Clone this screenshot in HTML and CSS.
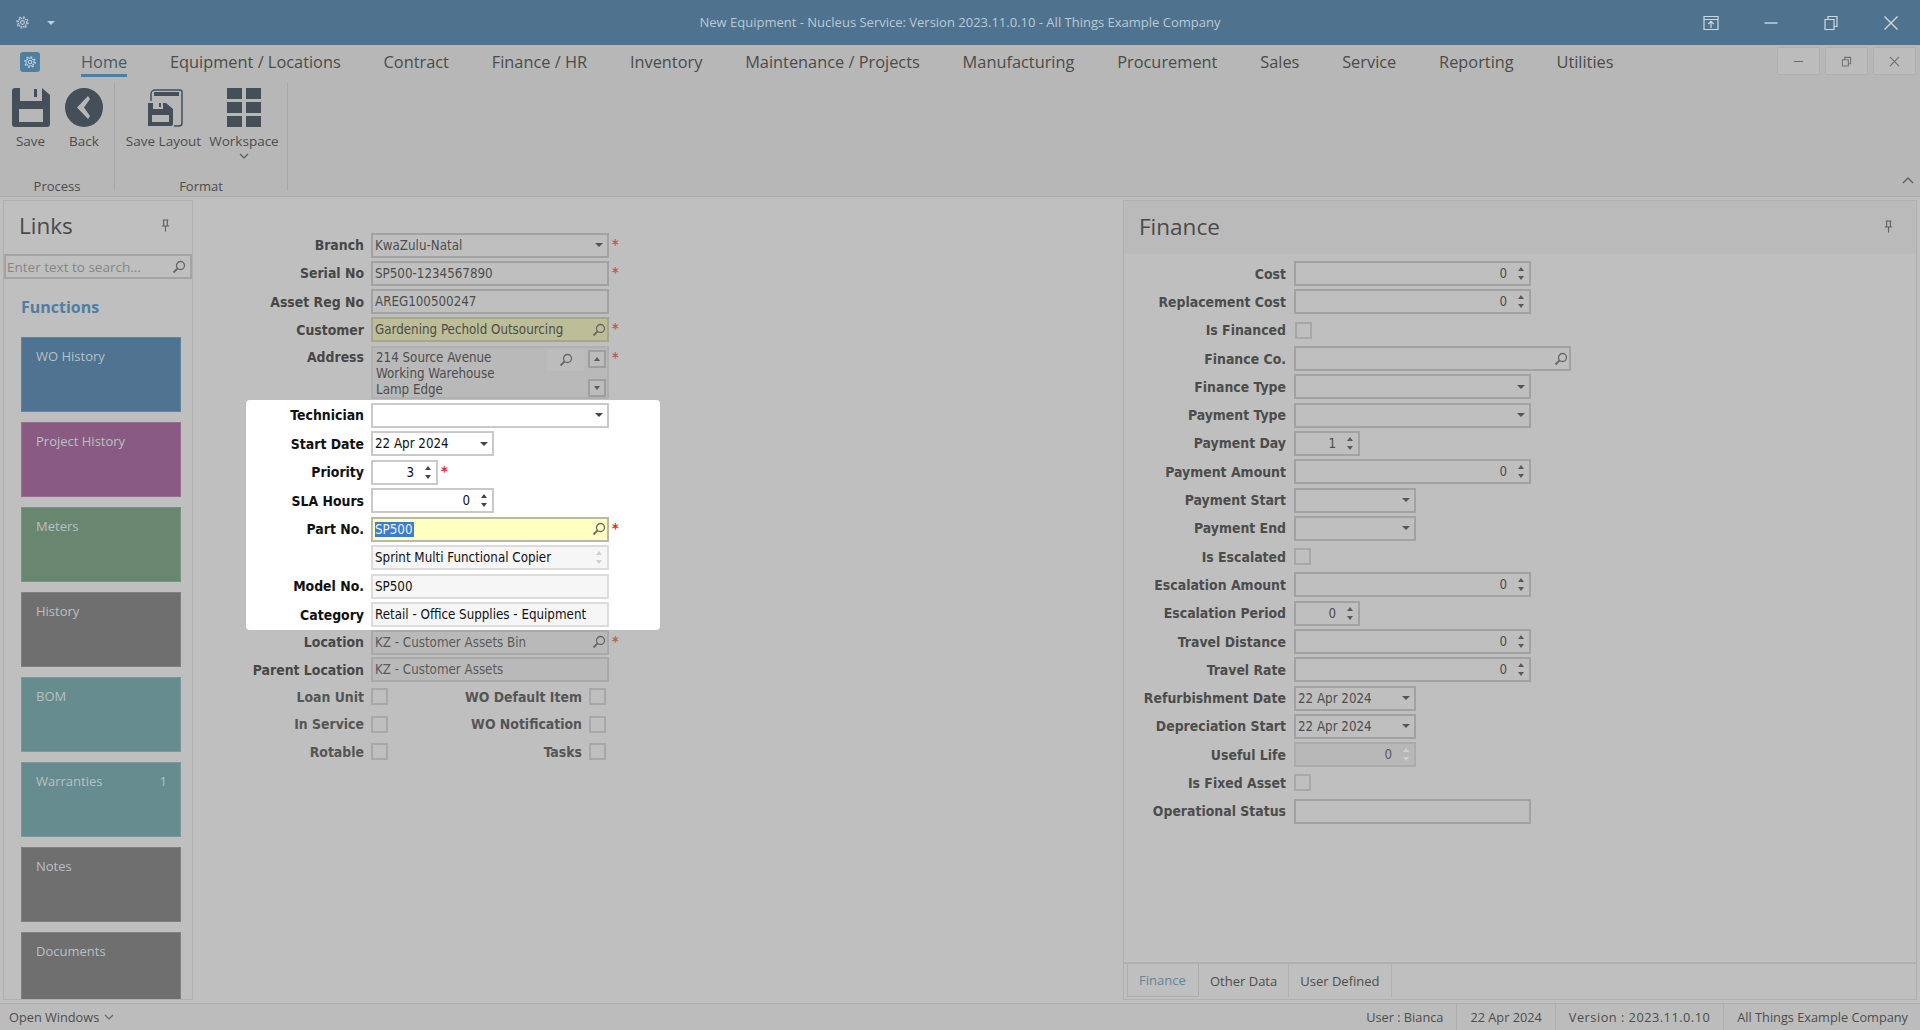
FILE: index.html
```html
<!DOCTYPE html>
<html lang="en">
<head>
<meta charset="utf-8">
<title>New Equipment - Nucleus Service</title>
<link rel="stylesheet" href="styles.css">
</head>
<body>
<svg class="sprite" width="0" height="0" aria-hidden="true">
  <symbol id="mag" viewBox="0 0 14 14"><circle cx="8.5" cy="5.5" r="4" fill="none" stroke="currentColor" stroke-width="1.3"/><path d="M5.6 8.4 1.5 12.5" fill="none" stroke="currentColor" stroke-width="1.8"/></symbol>
  <symbol id="pin" viewBox="0 0 12 14"><path d="M3 1h6M4 1v6M8 1v6M2 7.5h8M6 8v5.5" fill="none" stroke="currentColor" stroke-width="1.2"/></symbol>
  <symbol id="gear" viewBox="0 0 16 16"><circle cx="8" cy="8" r="4.6" fill="none" stroke="currentColor" stroke-width="1.6" stroke-dasharray="1.6 .8"/><circle cx="8" cy="8" r="6" fill="none" stroke="currentColor" stroke-width="1.4" stroke-dasharray="2 2.7"/><circle cx="8" cy="8" r="2" fill="none" stroke="currentColor" stroke-width="1.2"/></symbol>
</svg>

<header class="titlebar">
  <div class="tb-left">
    <svg class="tb-gear"><use href="#gear"/></svg>
    <span class="tb-caret"></span>
  </div>
  <div class="tb-title">New Equipment - Nucleus Service: Version 2023.11.0.10 - All Things Example Company</div>
  <div class="tb-right">
    <svg class="tb-btn" viewBox="0 0 16 16"><path d="M1 1.5h14v13H1zM1 4.5h14M8 13V6.5M5.3 9 8 6.3 10.7 9" fill="none" stroke="currentColor" stroke-width="1.2"/></svg>
    <svg class="tb-btn" viewBox="0 0 16 16"><path d="M1.5 8h13" fill="none" stroke="currentColor" stroke-width="1.4"/></svg>
    <svg class="tb-btn" viewBox="0 0 16 16"><path d="M2 4.5h9v10H2zM5 4.500V1.500h9v10h-3" fill="none" stroke="currentColor" stroke-width="1.2"/></svg>
    <svg class="tb-btn" viewBox="0 0 16 16"><path d="M1.500 1.500 14.500 14.500M14.500 1.500 1.500 14.500" fill="none" stroke="currentColor" stroke-width="1.400"/></svg>
  </div>
</header>

<section class="ribbon">
  <nav class="tabs">
    <span class="app-icon"><svg class="app-gear"><use href="#gear"/></svg></span>
    <div class="tab-list">
      <span class="tab active">Home</span>
      <span class="tab">Equipment / Locations</span>
      <span class="tab">Contract</span>
      <span class="tab">Finance / HR</span>
      <span class="tab">Inventory</span>
      <span class="tab">Maintenance / Projects</span>
      <span class="tab">Manufacturing</span>
      <span class="tab">Procurement</span>
      <span class="tab">Sales</span>
      <span class="tab">Service</span>
      <span class="tab">Reporting</span>
      <span class="tab">Utilities</span>
    </div>
    <div class="doc-btns">
      <span class="doc-btn"><svg viewBox="0 0 12 12"><path d="M1 6h10" fill="none" stroke="currentColor" stroke-width="1.200"/></svg></span>
      <span class="doc-btn"><svg viewBox="0 0 12 12"><path d="M1.500 4h6.500v7H1.500zM4 4V1.500h6.500v7H8" fill="none" stroke="currentColor" stroke-width="1.100"/></svg></span>
      <span class="doc-btn"><svg viewBox="0 0 12 12"><path d="M1 1 11 11M11 1 1 11" fill="none" stroke="currentColor" stroke-width="1.200"/></svg></span>
    </div>
  </nav>
  <div class="ribbon-body">
    <div class="rgroup rg-process">
      <div class="rg-items">
        <div class="rbtn rb-save">
          <svg class="ricon" viewBox="0 0 38 39"><path fill-rule="evenodd" d="M3 0h5v13h22V0l8 7v29a3 3 0 0 1-3 3H3a3 3 0 0 1-3-3V3a3 3 0 0 1 3-3ZM7 21v13h24V21ZM22 1h3v8h-3Z"/></svg>
          <span>Save</span>
        </div>
        <div class="rbtn rb-back">
          <svg class="ricon" viewBox="0 0 38 39"><path fill-rule="evenodd" d="M19 0a19 19.500 0 1 1 0 39a19 19.500 0 0 1 0-39ZM23 8 12 19.500 23 31 25 28 19 19.500 25 11Z"/></svg>
          <span>Back</span>
        </div>
      </div>
      <div class="rg-label">Process</div>
    </div>
    <div class="rgroup rg-format">
      <div class="rg-items">
        <div class="rbtn rb-layout">
          <svg class="ricon" viewBox="0 0 38 39"><path d="M6 13V6a4 4 0 0 1 4-4h25a2 2 0 0 1 2 2v31a3 3 0 0 1-3 3h-5" fill="none" stroke="currentColor" stroke-width="1.500"/><path d="M9 4h25v4H9Z"/><path fill-rule="evenodd" d="M3 15h5v6h10v-6h3l7 6v15a2 2 0 0 1-2 2H3ZM7 27v7h17v-7ZM14 15h2v4h-2Z"/></svg>
          <span>Save Layout</span>
        </div>
        <div class="rbtn rb-work">
          <svg class="ricon" viewBox="0 0 36 39"><path d="M1 0h15v11H1ZM20 0h15v11H20ZM1 14h15v11H1ZM20 14h15v11H20ZM1 28h15v11H1ZM20 28h15v11H20Z"/></svg>
          <span>Workspace</span>
          <svg class="rchev" viewBox="0 0 10 6"><path d="M1 1 5 5 9 1" fill="none" stroke="currentColor" stroke-width="1.200"/></svg>
        </div>
      </div>
      <div class="rg-label">Format</div>
    </div>
    <svg class="collapse" viewBox="0 0 12 7"><path d="M1 6 6 1l5 5" fill="none" stroke="currentColor" stroke-width="1.400"/></svg>
  </div>
</section>

<main class="main">
  <aside class="links">
    <div class="links-head"><span class="panel-title">Links</span><svg class="pin"><use href="#pin"/></svg></div>
    <div class="search"><span>Enter text to search...</span><svg class="mag"><use href="#mag"/></svg></div>
    <div class="fn-title">Functions</div>
    <div class="tiles">
      <div class="tile t-blue">WO History</div>
      <div class="tile t-purple">Project History</div>
      <div class="tile t-green">Meters</div>
      <div class="tile t-grey">History</div>
      <div class="tile t-teal">BOM</div>
      <div class="tile t-teal"><span>Warranties</span><span>1</span></div>
      <div class="tile t-grey">Notes</div>
      <div class="tile t-grey">Documents</div>
    </div>
  </aside>

  <section class="form">
    <div class="fgroup g-top">
      <div class="row"><label>Branch</label><div class="field w-full"><span class="val">KwaZulu-Natal</span><i class="caret"></i></div><b class="req">*</b></div>
      <div class="row"><label>Serial No</label><div class="field w-full"><span class="val">SP500-1234567890</span></div><b class="req">*</b></div>
      <div class="row"><label>Asset Reg No</label><div class="field w-full"><span class="val">AREG100500247</span></div></div>
      <div class="row"><label>Customer</label><div class="field w-full f-khaki"><span class="val">Gardening Pechold Outsourcing</span><svg class="mag"><use href="#mag"/></svg></div><b class="req">*</b></div>
      <div class="row row-addr"><label>Address</label>
        <div class="field w-full f-addr">
          <div class="addr-text">214 Source Avenue<br>Working Warehouse<br>Lamp Edge</div>
          <span class="addr-mag"><svg class="mag"><use href="#mag"/></svg></span>
          <div class="addr-scroll"><span class="sb"><i class="up"></i></span><span class="sb"><i class="down"></i></span></div>
        </div><b class="req">*</b></div>
    </div>

    <div class="fgroup g-spot">
      <div class="row"><label>Technician</label><div class="field w-full"><span class="val"></span><i class="caret"></i></div></div>
      <div class="row"><label>Start Date</label><div class="field w-date"><span class="val">22 Apr 2024</span><i class="caret"></i></div></div>
      <div class="row"><label>Priority</label><div class="field w-pri num"><span class="val">3</span><span class="spin"><i class="up"></i><i class="down"></i></span></div><b class="req">*</b></div>
      <div class="row"><label>SLA Hours</label><div class="field w-date num"><span class="val">0</span><span class="spin"><i class="up"></i><i class="down"></i></span></div></div>
      <div class="row"><label>Part No.</label><div class="field w-full f-yellow"><span class="val"><span class="sel">SP500</span></span><svg class="mag"><use href="#mag"/></svg></div><b class="req">*</b></div>
      <div class="row"><label></label><div class="field w-full f-ro"><span class="val">Sprint Multi Functional Copier</span><span class="spin spin-pale"><i class="up"></i><i class="down"></i></span></div></div>
      <div class="row"><label>Model No.</label><div class="field w-full f-ro"><span class="val">SP500</span></div></div>
      <div class="row"><label>Category</label><div class="field w-full f-ro"><span class="val">Retail - Office Supplies - Equipment</span></div></div>
    </div>

    <div class="fgroup g-bottom">
      <div class="row"><label>Location</label><div class="field w-full f-dis"><span class="val">KZ - Customer Assets Bin</span><svg class="mag"><use href="#mag"/></svg></div><b class="req">*</b></div>
      <div class="row"><label>Parent Location</label><div class="field w-full f-dis"><span class="val">KZ - Customer Assets</span></div></div>
    </div>

    <div class="checks">
      <label>Loan Unit</label><i class="check"></i><label>WO Default Item</label><i class="check"></i>
      <label>In Service</label><i class="check"></i><label>WO Notification</label><i class="check"></i>
      <label>Rotable</label><i class="check"></i><label>Tasks</label><i class="check"></i>
    </div>
  </section>

  <aside class="finance">
    <div class="fin-head"><span class="panel-title">Finance</span><svg class="pin"><use href="#pin"/></svg></div>
    <div class="fin-body">
      <div class="frow"><label>Cost</label><div class="field w-fin num"><span class="val">0</span><span class="spin"><i class="up"></i><i class="down"></i></span></div></div>
      <div class="frow"><label>Replacement Cost</label><div class="field w-fin num"><span class="val">0</span><span class="spin"><i class="up"></i><i class="down"></i></span></div></div>
      <div class="frow fr-shift"><label>Is Financed</label><i class="check"></i></div>
      <div class="frow"><label>Finance Co.</label><div class="field w-co"><span class="val"></span><svg class="mag"><use href="#mag"/></svg></div></div>
      <div class="frow"><label>Finance Type</label><div class="field w-fin"><span class="val"></span><i class="caret"></i></div></div>
      <div class="frow"><label>Payment Type</label><div class="field w-fin"><span class="val"></span><i class="caret"></i></div></div>
      <div class="frow"><label>Payment Day</label><div class="field w-day num"><span class="val">1</span><span class="spin"><i class="up"></i><i class="down"></i></span></div></div>
      <div class="frow"><label>Payment Amount</label><div class="field w-fin num"><span class="val">0</span><span class="spin"><i class="up"></i><i class="down"></i></span></div></div>
      <div class="frow"><label>Payment Start</label><div class="field w-fdate"><span class="val"></span><i class="caret"></i></div></div>
      <div class="frow"><label>Payment End</label><div class="field w-fdate"><span class="val"></span><i class="caret"></i></div></div>
      <div class="frow"><label>Is Escalated</label><i class="check"></i></div>
      <div class="frow"><label>Escalation Amount</label><div class="field w-fin num"><span class="val">0</span><span class="spin"><i class="up"></i><i class="down"></i></span></div></div>
      <div class="frow"><label>Escalation Period</label><div class="field w-day num"><span class="val">0</span><span class="spin"><i class="up"></i><i class="down"></i></span></div></div>
      <div class="frow"><label>Travel Distance</label><div class="field w-fin num"><span class="val">0</span><span class="spin"><i class="up"></i><i class="down"></i></span></div></div>
      <div class="frow"><label>Travel Rate</label><div class="field w-fin num"><span class="val">0</span><span class="spin"><i class="up"></i><i class="down"></i></span></div></div>
      <div class="frow"><label>Refurbishment Date</label><div class="field w-fdate"><span class="val">22 Apr 2024</span><i class="caret"></i></div></div>
      <div class="frow"><label>Depreciation Start</label><div class="field w-fdate"><span class="val">22 Apr 2024</span><i class="caret"></i></div></div>
      <div class="frow"><label>Useful Life</label><div class="field w-fdate num f-life"><span class="val">0</span><span class="spin spin-pale"><i class="up"></i><i class="down"></i></span></div></div>
      <div class="frow"><label>Is Fixed Asset</label><i class="check"></i></div>
      <div class="frow"><label>Operational Status</label><div class="field w-fin"><span class="val"></span></div></div>
    </div>
    <div class="fin-tabs">
      <span class="ftab on">Finance</span>
      <span class="ftab">Other Data</span>
      <span class="ftab">User Defined</span>
    </div>
  </aside>
</main>

<footer class="status">
  <div class="open-win">Open Windows <svg viewBox="0 0 10 6"><path d="M1 1 5 5 9 1" fill="none" stroke="currentColor" stroke-width="1.200"/></svg></div>
  <div class="st-items">
    <span>User : Bianca</span>
    <span>22 Apr 2024</span>
    <span class="st-ver">Version : 2023.11.0.10</span>
    <span>All Things Example Company</span>
  </div>
</footer>
</body>
</html>
```

FILE: styles.css
```css
* { box-sizing: border-box; }
html, body { margin: 0; height: 100%; }
body {
  width: 1920px; height: 1030px; overflow: hidden;
  display: flex; flex-direction: column;
  background: #bfbfbf; color: #444;
  font-family: "Open Sans", "Liberation Sans", sans-serif;
}
.sprite { position: absolute; }

/* Title bar */
.titlebar {
  height: 45px; flex: none; background: #4f738f; color: #c3ced7;
  display: grid; grid-template-columns: 1fr auto 1fr; align-items: center;
}
.tb-left { display: flex; align-items: center; padding-left: 15px; }
.tb-gear { width: 15px; height: 15px; color: #bcc8d2; }
.tb-caret { margin-left: 17px; border: 4px solid transparent; border-top-color: #c3ced7; border-bottom: 0; }
.tb-title { font-size: 13px; color: #bcc9d3; padding-bottom: 1px; }
.tb-right { display: flex; justify-content: flex-end; align-items: center; padding-right: 21px; gap: 44px; }
.tb-btn { width: 16px; height: 16px; color: #d0d8df; }

/* Ribbon */
.ribbon { height: 152px; flex: none; background: #b7b7b7; border-bottom: 1px solid #ababab; display: flex; flex-direction: column; }
.tabs { height: 35px; display: flex; align-items: flex-start; padding-left: 20px; }
.app-icon { width: 20px; height: 20px; margin-top: 7px; border-radius: 3px; background: #4f7fa0; display: flex; align-items: center; justify-content: center; }
.app-gear { width: 14px; height: 14px; color: #c5d3de; }
.tab-list { display: flex; gap: 42.800px; margin-left: 41px; }
.tab { font-size: 16.350px; line-height: 24px; height: 32px; padding-top: 5px; color: #4b4b4b; box-sizing: border-box; white-space: nowrap; }
.tab.active { color: #4a5a68; border-bottom: 3px solid #4f7fa0; }
.doc-btns { margin-left: auto; display: flex; gap: 5px; padding: 2px 4px 0 0; }
.doc-btn { width: 43px; height: 28px; background: #bcbcbc; border: 1px solid #b0b0b0; border-radius: 2px; display: flex; align-items: center; justify-content: center; color: #707070; }
.doc-btn svg { width: 11px; height: 11px; }

.ribbon-body { flex: 1; display: flex; position: relative; }
.rgroup { display: flex; flex-direction: column; height: 108px; margin-top: 3px; border-right: 1px solid #a8a8a8; }
.rg-process { width: 115px; }
.rg-format { width: 173px; }
.rg-process .rg-items { padding-left: 7px; }
.rg-format .rg-items { padding-left: 4px; }
.rg-items { display: flex; flex: 1; margin-top: 5px; }
.rg-label { font-size: 13px; line-height: 18px; margin-bottom: -4px; text-align: center; color: #4c4c4c; }
.rbtn { display: flex; flex-direction: column; align-items: center; font-size: 13.500px; color: #4c4c4c; }
.rbtn span { margin-top: 5px; line-height: 18px; white-space: nowrap; }
.ricon { height: 39px; width: 38px; fill: #454f5a; color: #454f5a; flex: none; }
.rb-save { width: 47px; }
.rb-back { width: 60px; }
.rb-layout { width: 89px; }
.rb-work { width: 72px; }
.rchev { width: 10px; height: 6px; margin-top: 3px; color: #5a5a5a; }
.collapse { position: absolute; right: 6px; top: 97px; width: 12px; height: 7px; color: #606060; }

/* Main */
.main { flex: 1; min-height: 0; display: flex; }
.links { width: 190px; margin: 3px 0 3px 3px; border: 1px solid #b0b0b0; display: flex; flex-direction: column; overflow: hidden; }
.links-head { height: 53px; display: flex; align-items: center; justify-content: space-between; padding: 0 21px 4px 15px; flex: none; }
.panel-title { font-size: 22.500px; color: #4a4a4a; }
.pin { width: 11px; height: 13px; color: #5e5e5e; }
.search { height: 25px; flex: none; border: 2px solid #a4a4a4; display: flex; align-items: center; justify-content: space-between; padding: 0 3px 0 1px; font-size: 13.500px; color: #858585; }
.fn-title { font-size: 16px; font-weight: 700; line-height: 20px; color: #4e7ea3; padding: 18px 0 0 17px; height: 58px; flex: none; }
.tiles { padding-left: 17px; display: flex; flex-direction: column; gap: 10px; }
.tile { flex: none; width: 160px; height: 75px; padding: 8px 13px 0 14px; font-size: 13px; line-height: 20px; color: #b9c0c4; border: 1px solid rgba(255,255,255,.12); display: flex; justify-content: space-between; }
.t-blue { background: #4f7390; }
.t-purple { background: #895b82; }
.t-green { background: #698670; }
.t-grey { background: #6f6f6f; }
.t-teal { background: #668c8f; }

/* Form */
.form { width: 930px; flex: none; padding: 35.500px 0 0 53px; font-family: "DejaVu Sans Condensed", "DejaVu Sans", sans-serif; font-size: 13.250px; }
.fgroup { display: flex; flex-direction: column; gap: 3.500px; width: 414px; }
.g-top { gap: 3.250px; height: 167px; }
.g-spot { background: #fff; border-radius: 4px; padding-top: 3px; height: 230px; color: #000; }
.g-bottom { gap: 2.500px; }
.row { display: flex; align-items: center; height: 25px; flex: none; }
.row-addr { height: 53px; align-items: flex-start; }
.row > label { width: 118px; margin-right: 7px; text-align: right; font-size: 13.900px; font-weight: 700; color: #474747; white-space: nowrap; }
.row-addr > label { padding-top: 3px; }
.g-spot .row > label { color: #111; }

.field { height: 25px; flex: none; border: 2px solid #a2a2a2; display: flex; align-items: center; padding: 0 0 0 2px; color: #4d4d4d; position: relative; }
.val { flex: 1; white-space: nowrap; overflow: hidden; }
.num .val { text-align: right; }
.w-full { width: 238px; }
.w-date { width: 123px; }
.w-pri { width: 67px; }
.w-fin { width: 237px; }
.w-co { width: 277px; }
.w-day { width: 66px; }
.w-fdate { width: 122px; }
.g-spot .field { border-color: #c9c9c9; color: #111; background: #fff; }
.g-spot .f-yellow { background: #ffffc0; border-color: #b9b9a8; }
.g-spot .f-ro { background: #f6f6f6; border-color: #dcdcdc; }
.f-khaki { background: #bdbd97; border-color: #a6a690; }
.f-dis { background: #b9b9b9; border-color: #a9a9a9; color: #5a5a5a; }
.f-life { background: #b8b8b8; border-color: #ababab; color: #5a5a5a; }
.sel { background: #3a7ccd; color: #eef4fb; padding: 1px 1px 1px 0; box-shadow: -1px 0 0 #a9653a; }

.caret { width: 0; height: 0; margin-right: 4px; border: 4px solid transparent; border-top: 4px solid #555; border-bottom: 0; flex: none; }
.g-spot .caret { border-top-color: #444; }
.mag { width: 14px; height: 14px; margin-right: 1px; color: #666; flex: none; }
.spin { display: flex; flex-direction: column; gap: 5px; width: 16px; align-items: center; margin-left: 6px; flex: none; }
.spin i, .sb i { display: block; width: 0; height: 0; border-left: 3.500px solid transparent; border-right: 3.500px solid transparent; }
.up { border-bottom: 4px solid #5a5a5a; }
.down { border-top: 4px solid #5a5a5a; }
.g-spot .up { border-bottom-color: #444; }
.g-spot .down { border-top-color: #444; }
.spin-pale .up, .g-spot .spin-pale .up { border-bottom-color: #cfcfcf; }
.spin-pale .down, .g-spot .spin-pale .down { border-top-color: #cfcfcf; }

.f-addr { height: 53px; border-color: #b0b0b0; background: #b9b9b9; align-items: flex-start; padding: 2px 0 0 3px; }
.addr-text { flex: 1; line-height: 16px; }
.addr-mag { width: 38px; height: 21px; background: #bcbcbc; display: flex; align-items: center; justify-content: center; margin-right: 3px; }
.addr-scroll { width: 18px; margin-right: 1px; display: flex; flex-direction: column; justify-content: space-between; height: 47px; }
.sb { width: 18px; height: 18px; border: 2px solid #9e9e9e; background: #bcbcbc; display: flex; align-items: center; justify-content: center; }

.req { width: 12px; margin-left: 3px; color: #e03a3a; font-weight: 700; font-size: 14px; line-height: 14px; align-self: flex-start; padding-top: 4px; }
.g-spot .req { color: #f01818; }
.g-top .req { color: #bf5a5a; }
.g-bottom .req { color: #bf5a5a; }

.checks { display: grid; grid-template-columns: 118px 17px 187px 17px; column-gap: 7px; row-gap: 10.500px; margin-top: 6px; align-items: center; font-size: 13.900px; font-weight: 700; color: #555; }
.checks label { text-align: right; white-space: nowrap; }
.check { width: 17px; height: 17px; border: 2px solid #a8a8a8; display: block; flex: none; }

/* Finance */
.finance { width: 794px; flex: none; margin: 3px 0 3px 0; border: 1px solid #b0b0b0; display: flex; flex-direction: column; font-family: "DejaVu Sans Condensed", "DejaVu Sans", sans-serif; font-size: 13.250px; }
.fin-head { height: 53px; flex: none; background: #bababa; display: flex; align-items: center; justify-content: space-between; padding: 0 22px 3px 15px; }
.finance .panel-title { font-family: "Open Sans", sans-serif; }
.fin-body { flex: 1; padding-top: 5.500px; }
.frow { display: flex; align-items: center; height: 28.300px; }
.frow label { width: 162px; margin-right: 8px; text-align: right; font-size: 13.900px; font-weight: 700; color: #4c4c4c; white-space: nowrap; }
.fr-shift label { margin-right: 9px; margin-left: 3px; width: 159px; }
.fin-tabs { height: 37px; flex: none; border-top: 2px solid #b0b0b0; display: flex; align-items: stretch; padding: 0 0 2px 3px; font-family: "Open Sans", sans-serif; font-size: 13px; color: #4d4d4d; }
.ftab { display: flex; align-items: center; padding: 0 11px; border-right: 1px solid #b0b0b0; }
.ftab.on { color: #5f84a0; width: 72px; padding-left: 11px; border: 1px solid #adadad; border-top: 0; }

/* Status */
.status { height: 27px; flex: none; display: flex; justify-content: space-between; align-items: stretch; background: #bcbcbc; border-top: 1px solid #adadad; font-size: 12.750px; color: #4d4d4d; }
.open-win { display: flex; align-items: center; gap: 5px; padding-left: 9px; }
.open-win svg { width: 10px; height: 6px; color: #666; }
.st-items { display: flex; padding-right: 12px; }
.st-items span { display: flex; align-items: center; padding: 0 13px; border-left: 1px solid #adadad; }
.st-items span:first-child { border-left: 0; }
.st-items span:last-child { padding-right: 0; }
.st-ver { letter-spacing: .5px; }
```
